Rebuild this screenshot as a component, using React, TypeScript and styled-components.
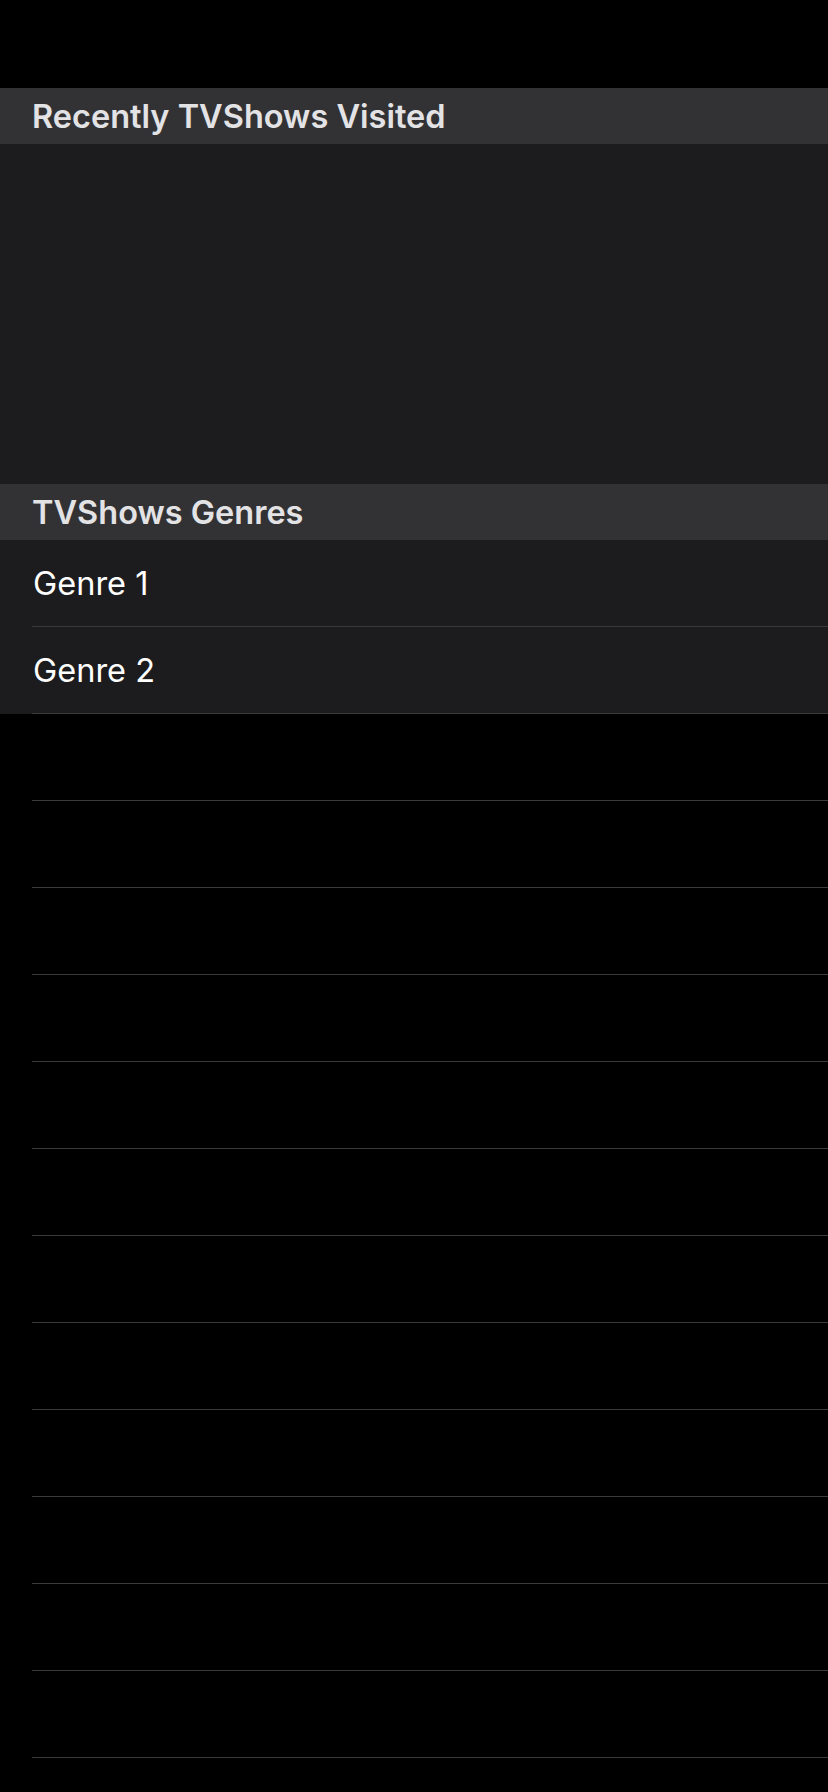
import React from "react";
import styled, { createGlobalStyle } from "styled-components";

const Global = createGlobalStyle`
  html, body { margin: 0; padding: 0; background: #000; }
  body { font-family: Inter, "Noto Sans", sans-serif; -webkit-font-smoothing: antialiased; }
`;

const Screen = styled.div`
  width: 828px;
  height: 1792px;
  overflow: hidden;
  background: #000;
  padding-top: 88px;
  box-sizing: border-box;
  display: flex;
  flex-direction: column;
  & > * { flex-shrink: 0; }
`;

const SectionHeader = styled.div`
  height: 56px;
  box-sizing: border-box;
  background: #323234;
  display: flex;
  align-items: center;
  padding-left: 32px;
  padding-top: 1px;
  font-size: 32.5px;
  font-weight: 600;
  color: #e3e3e6;
`;

const EmptySection = styled.div`
  height: 340px;
  background: #1c1c1e;
`;

const List = styled.div`
  display: flex;
  flex-direction: column;
`;

const Row = styled.div<{ $filled?: boolean }>`
  height: 87px;
  flex-shrink: 0;
  box-sizing: border-box;
  background: ${(p) => (p.$filled ? "#1c1c1e" : "transparent")};
  padding-left: 32px;
  display: flex;
`;

const RowInner = styled.div`
  flex: 1;
  display: flex;
  align-items: center;
  border-bottom: 1px solid #3a3a3c;
  font-size: 32.5px;
  font-weight: 400;
  color: #ffffff;
  padding-left: 1px;
`;

const genres = ["Genre 1", "Genre 2"];
const fillers = Array.from({ length: 13 });

export default function App() {
  return (
    <>
      <Global />
      <Screen>
        <SectionHeader>Recently TVShows Visited</SectionHeader>
        <EmptySection />
        <SectionHeader>TVShows Genres</SectionHeader>
        <List>
          {genres.map((g) => (
            <Row key={g} $filled>
              <RowInner>{g}</RowInner>
            </Row>
          ))}
          {fillers.map((_, i) => (
            <Row key={i}>
              <RowInner />
            </Row>
          ))}
        </List>
      </Screen>
    </>
  );
}
